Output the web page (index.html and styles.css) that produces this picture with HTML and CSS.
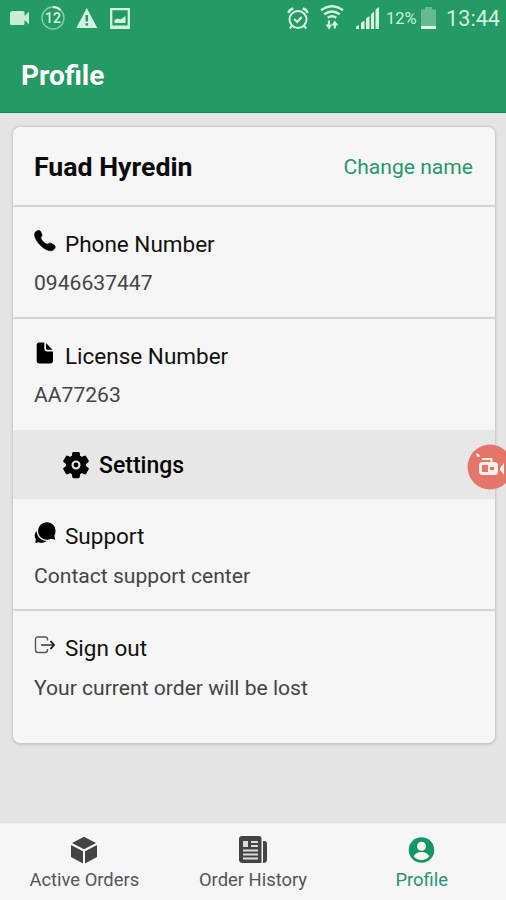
FILE: index.html
```html
<!DOCTYPE html>
<html lang="en">
<head>
<meta charset="utf-8">
<title>Profile</title>
<link rel="stylesheet" href="styles.css">
</head>
<body>
<div class="screen">
  <header class="header">
    <div class="status">
      <div class="status-left">
        <svg width="20" height="14" viewBox="0 0 20 14"><path fill="#c9ecd9" d="M1.500 0h11.500q1.500 0 1.500 1.500v3.500l4.500-4.300v12.600l-4.500-4.300v3.500q0 1.500-1.500 1.500h-11.500q-1.500 0-1.500-1.500v-10.500q0-1.500 1.500-1.500z"/></svg>
        <div class="count"><svg width="26" height="26" viewBox="0 0 26 26" fill="none"><circle cx="13" cy="13" r="11" stroke="#8bceac" stroke-width="1.300"/><path d="M13 2a11 11 0 0 1 7.500 3" stroke="#e0f7eb" stroke-width="2"/></svg><span>12</span></div>
        <svg class="warning" width="22" height="20" viewBox="0 0 22 20"><path fill="#d3f2e1" d="M10.800 0L21.300 20H.3z"/><path stroke="#249a65" stroke-width="2.500" d="M10.800 7v6.500M10.800 15.200v2.300"/></svg>
        <svg width="20" height="21" viewBox="0 0 20 21"><path fill="none" stroke="#d3f2e1" stroke-width="2.300" d="M1.200 1.200h17.600v18.600h-17.600z"/><path fill="#d3f2e1" d="M4.500 15v-3l3-1.500 3 1 5-3.500v7z"/><path stroke="#d3f2e1" stroke-width="1.500" d="M1 18.200h18"/></svg>
      </div>
      <div class="status-right">
        <svg class="alarm" width="22" height="23" viewBox="0 0 22 23" fill="none" stroke="#d5f3e3" stroke-width="2"><circle cx="11" cy="12.500" r="8.500"/><path d="M7 12l3.200 3 4.500-5M5 18.500l-2.200 3M17 18.500l2.200 3"/><path stroke-width="2.400" d="M1.300 6q1-3.500 5-4.500M20.700 6q-1-3.500-5-4.500"/></svg>
        <svg class="wifi" width="24" height="25" viewBox="0 0 24 25" fill="none" stroke="#d5f3e3" stroke-width="2.400"><path d="M1 5.200q11-8 22 0M4.300 9.200q7.700-5.500 15.400 0M7.700 12.700q4.300-3 8.600 0"/><path stroke-width="2.200" d="M9 15.500v6M14.800 23.500v-6"/><path fill="#d5f3e3" stroke="none" d="M5.500 19.500h7L9 24.500zM11.300 20.500h7l-3.500-5z"/></svg>
        <svg class="signal" width="24" height="22" viewBox="0 0 24 22" fill="#d5f3e3"><path d="M0 19.500l3-1.500v4H0zM5 15.500l3.500-2V22H5zM10 11.500l3.500-2.500V22H10zM15 7l3-2.500V22h-3zM19.500 2.500l3.500-2.500v22h-3.500z"/></svg>
        <span class="percent">12%</span>
        <svg class="battery" width="15" height="22" viewBox="0 0 15 22"><path fill="#65ba91" d="M4 0h7v2.500h4V22H0V2.500h4z"/><path fill="#e4f7ec" d="M0 19h15v3H0z"/></svg>
        <span class="clock">13:44</span>
      </div>
    </div>
    <h1 class="title">Profile</h1>
  </header>
  <main class="content">
    <section class="card">
      <div class="name-row"><h2 class="name">Fuad Hyredin</h2><a class="change">Change name</a></div>
      <div class="row">
        <div class="row-head"><svg width="22" height="22" viewBox="0 0 22 22"><path d="M2.300 1.200C4 0 5.800.1 6.700 1.800l1.100 2.400c.6 1.300-.2 2-.9 2.800-.8.900 1.200 3.600 2.700 5.100 1.500 1.400 3.500 2.700 4.600 1.900.9-.8 1.600-1.300 2.800-.7l3.100 1.700c1.400.8 1.400 2.700.2 4.100-2 2.600-6.400 2.200-11.300-1.600C4.500 14 1.300 9.500.7 5.600.4 3.700 1 2.200 2.300 1.200z" stroke="#000" stroke-width=".7"/></svg><span class="label">Phone Number</span></div>
        <p class="value">0946637447</p>
      </div>
      <div class="row last">
        <div class="row-head"><svg width="22" height="22" viewBox="0 0 22 22"><path d="M4.800.5h5.500v6q0 3 3 3H19v9.300q0 2.700-2.700 2.700H5.100q-2.400 0-2.400-2.700V3.200Q2.700.5 4.800.5zM12 1l6.500 6.700h-5Q12 7.700 12 6.200z"/></svg><span class="label">License Number</span></div>
        <p class="value">AA77263</p>
      </div>
      <div class="settings">
        <svg width="30" height="30" viewBox="0 0 24 24"><path d="M19.430 12.980c.04-.32.070-.64.070-.98s-.03-.66-.07-.98l2.110-1.650c.19-.15.240-.42.120-.64l-2-3.460c-.12-.22-.39-.3-.61-.22l-2.490 1c-.52-.4-1.080-.73-1.690-.98l-.38-2.650C14.460 2.180 14.250 2 14 2h-4c-.25 0-.46.18-.49.42l-.38 2.650c-.61.25-1.170.59-1.690.98l-2.490-1c-.23-.09-.49 0-.61.220l-2 3.460c-.13.220-.07.49.12.640l2.110 1.650c-.04.320-.07.650-.07.980s.03.660.07.980l-2.110 1.650c-.19.150-.24.420-.12.640l2 3.460c.12.220.39.300.61.220l2.490-1c.52.400 1.080.730 1.690.980l.38 2.650c.03.240.24.420.49.420h4c.25 0 .46-.18.49-.42l.38-2.650c.61-.25 1.170-.59 1.690-.98l2.490 1c.23.090.49 0 .61-.22l2-3.460c.12-.22.070-.49-.12-.64l-2.110-1.650z" stroke="#050505"/><circle cx="12" cy="12" r="2.800" fill="#050505" stroke="#e7e7e7" stroke-width="1.700"/></svg>
        <span>Settings</span>
      </div>
      <div class="row lower">
        <div class="row-head"><svg width="22" height="22" viewBox="0 0 22 22"><path d="M13 .3c5 0 8.500 3.700 8.500 8.400 0 2-.5 3.500-1.100 4.700l.9 4.400-4.300-1.100c-6 2.800-12.900-.9-12.900-7.600C4.100 4 8 .3 13 .3z"/><path d="M2.700 9C2.600 14.400 7 18.800 12.700 19c-2.300 1.800-5.500 2.300-8 1.200L1.300 21l.6-3.700C0 14.200.6 11 2.700 9z"/></svg><span class="label">Support</span></div>
        <p class="value">Contact support center</p>
      </div>
      <div class="row lower last">
        <div class="row-head"><svg width="22" height="22" viewBox="0 0 22 22" fill="none" stroke="#333" stroke-width="1.400"><path stroke="#555" d="M13.500 6.500V5.500Q13.500 3 11 3H4Q1.500 3 1.500 5.500v10.500q0 2.500 2.500 2.500H11q2.500 0 2.500-2.500V15"/><path d="M7 11h13"/><path stroke="#111" stroke-width="1.800" d="M16.500 7L20 11l-3.500 4"/></svg><span class="label">Sign out</span></div>
        <p class="value">Your current order will be lost</p>
      </div>
    </section>
  </main>
  <nav class="tabs">
    <a class="tab"><svg width="28" height="28" viewBox="0 0 28 28" fill="#444"><path d="M14 .8L26 7l-12 6.300L2 7zM1 9l12 6.200v12.300L1 21zM27 9l-12 6.200v12.300L27 21z"/></svg><span>Active Orders</span></a>
    <a class="tab"><svg width="28" height="28" viewBox="0 0 28 28"><path fill="#444" d="M3 0h17q2.500 0 2.500 2.500V27H3.500Q0 27 0 23.500V3Q0 0 3 0zM24 5h1.500Q28 5 28 7.500v16q0 3.500-4 3.500z"/><path stroke="#ddd" stroke-width="1.800" d="M12 6h7M12 10h7M4 14.500h15M4 18.500h15M4 22.500h15"/><path fill="#ddd" d="M4 5h5v6H4z"/></svg><span>Order History</span></a>
    <a class="tab selected"><svg width="28" height="28" viewBox="0 0 28 28"><circle cx="13.500" cy="14" r="12.800" fill="#169761"/><circle cx="13.500" cy="10.300" r="4.500" fill="#f5f5f5"/><path fill="#f5f5f5" d="M5.800 20.200c2.500-5.500 12.900-5.500 15.400 0-3.200 5-12.200 5-15.400 0z"/></svg><span>Profile</span></a>
  </nav>
  <div class="recorder"><svg width="46" height="46" viewBox="0 0 46 46" fill="none"><circle cx="23" cy="23" r="22.500" fill="#e47669"/><path fill="#fff1e9" d="M9 9.500l3 .5 1 3-3-.5z"/><path stroke="#fff1e9" stroke-width="1.800" d="M15 15h9.500v4"/><rect x="13.500" y="19.500" width="16" height="10" rx="2" stroke="#fff1e9" stroke-width="3"/><path fill="#fff1e9" d="M21 19h9v11h-9z"/><path fill="#e47669" d="M23 23h4v3h-4z"/><path fill="#fff1e9" d="M33 24l4-5v12l-4-5z"/></svg></div>
</div>
</body>
</html>
```
FILE: styles.css
```css
* { box-sizing: border-box; }
body { margin: 0; font-family: Roboto, "Liberation Sans", sans-serif; color: #111; }
h1, h2, p { margin: 0; }
svg { display: block; flex: none; }
.screen { position: relative; width: 506px; height: 900px; display: flex; flex-direction: column; background: #e4e4e4; overflow: hidden; }
.header { height: 113px; background: #249a65; border-bottom: 1px solid #168353; color: #fff; }
.status { height: 36px; display: flex; justify-content: space-between; }
.status-left { display: flex; align-items: center; padding-left: 10px; gap: 11px; }
.count { position: relative; width: 26px; height: 26px; margin-left: -1px; }
.count span { position: absolute; inset: 0; text-align: center; font-size: 14px; font-weight: 500; line-height: 26px; color: #d5f3e3; }
.warning { margin-left: -1px; margin-right: 1px; }
.status-right { display: flex; align-items: center; padding-right: 7px; color: #cfeedd; }
.alarm { margin-right: 11px; }
.wifi { margin-right: 12px; margin-top: -2px; }
.signal { margin-right: 6px; }
.percent { width: 32px; font-size: 16.5px; }
.battery { margin: 0 10px 0 3px; }
.clock { font-size: 21.700px; width: 53px; padding-top: 1px; }
.title { font-size: 28px; font-weight: 700; line-height: 32px; margin: 24px 0 0 21px; }
.content { flex: 1; padding: 14px 11px 0 13px; }
.card { height: 616px; background: #f5f5f5; border-radius: 7px; box-shadow: 0 0 2px 1px #c9c9c9, 0 2px 3px #ccc; overflow: hidden; }
.name-row { height: 80px; display: flex; align-items: center; justify-content: space-between; padding: 1px 22px 0 21px; border-bottom: 2px solid #d4d4d4; }
.name { font-size: 26.7px; font-weight: 700; line-height: 34px; color: #0a0a0a; }
.change { font-size: 21.1px; color: #26996a; }
.row { height: 112px; padding: 23px 21px 0; border-bottom: 2px solid #d4d4d4; }
.last { height: 111px; border-bottom: 0; }
.row-head { display: flex; gap: 9px; height: 32px; }
.label { font-size: 22.5px; line-height: 28px; white-space: nowrap; }
.value { font-size: 21.1px; line-height: 26px; margin-top: 8px; color: #444; white-space: nowrap; }
.lower .value { margin-top: 9px; }
.settings { height: 69px; background: #e7e7e7; display: flex; align-items: center; gap: 8px; padding: 1px 0 0 48px; font-size: 23px; font-weight: 500; color: #050505; }
.tabs { height: 77px; background: #f5f5f5; border-top: 1px solid #efefef; display: grid; grid-template-columns: repeat(3, 1fr); }
.tab { display: flex; flex-direction: column; align-items: center; padding-top: 12px; font-size: 18.4px; line-height: 24px; color: #555; }
.tab span { margin-top: 4px; white-space: nowrap; }
.tab.selected { color: #24966a; }
.recorder { position: absolute; left: 467px; top: 444px; }
```
